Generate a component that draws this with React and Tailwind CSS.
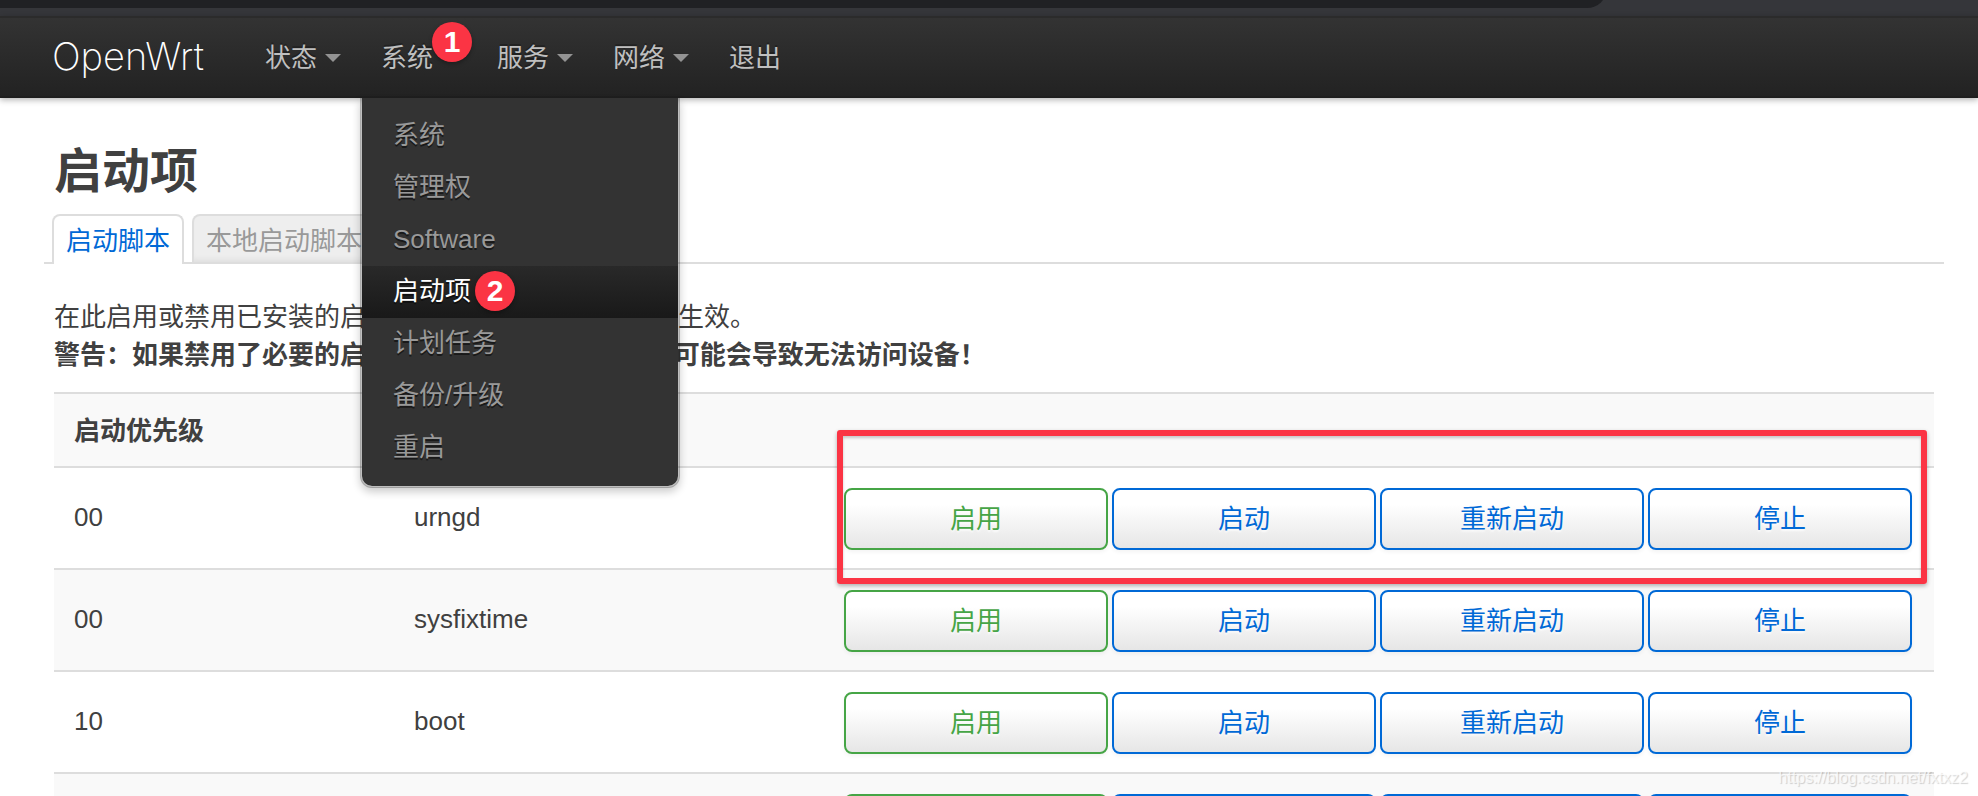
const NAV_ITEMS = [
  { label: '状态', caret: true },
  { label: '系统', open: true, badge: 1 },
  { label: '服务', caret: true },
  { label: '网络', caret: true },
  { label: '退出' },
];

const SYSTEM_MENU = [
  { label: '系统' },
  { label: '管理权' },
  { label: 'Software' },
  { label: '启动项', active: true, badge: 2 },
  { label: '计划任务' },
  { label: '备份/升级' },
  { label: '重启' },
];

const SCRIPTS = [
  { priority: '00', name: 'urngd', marked: true },
  { priority: '00', name: 'sysfixtime' },
  { priority: '10', name: 'boot' },
  { priority: '10', name: 'system' },
];

const Badge = ({ children }) => (
  <span className="flex h-10 w-10 items-center justify-center rounded-full bg-[#fb3444] text-[30px] leading-none font-bold text-white shadow-[0_2px_4px_rgba(0,0,0,0.3)] [text-shadow:none]">
    {children}
  </span>
);

const SystemMenu = () => (
  <ul className="absolute top-full left-0 z-20 w-80 rounded-b-xl border-2 border-t-0 border-black/25 bg-[#333] bg-clip-padding py-3 shadow-[0_4px_8px_rgba(0,0,0,0.2)]">
    {SYSTEM_MENU.map((item) => (
      <li key={item.label}>
        <a
          href="#"
          className={
            item.active
              ? 'relative flex h-[52px] items-center bg-linear-to-b from-[#292929] to-[#191919] pb-[2px] pl-[31px] text-white [text-shadow:0_2px_0_rgba(0,0,0,0.5)]'
              : 'flex h-[52px] items-center pb-[2px] pl-[31px] text-[#999] [text-shadow:0_2px_0_rgba(0,0,0,0.5)]'
          }
        >
          {item.label}
          {item.badge && (
            <span className="absolute left-[113px]">
              <Badge>{item.badge}</Badge>
            </span>
          )}
        </a>
      </li>
    ))}
  </ul>
);

const Header = () => (
  <header className="relative z-10 flex h-[82px] border-t-2 border-[#2b2b2b] bg-linear-to-b from-[#333] to-[#222] pl-[52px] shadow-[0_2px_6px_rgba(0,0,0,0.3),inset_0_-2px_0_rgba(0,0,0,0.1)]">
    <a
      href="#"
      className="flex w-[192px] items-center pb-1 font-['Inter'] text-[38px] leading-none font-extralight text-white"
    >
      OpenWrt
    </a>
    <nav className="flex">
      <ul className="flex">
        {NAV_ITEMS.map((item) => (
          <li key={item.label} className="relative flex w-[116px]">
            <a
              href="#"
              className="flex items-center gap-2 pl-[21px] text-[#bfbfbf] [text-shadow:0_-2px_0_rgba(0,0,0,0.25)]"
            >
              {item.label}
              {item.caret && (
                <span className="h-0 w-0 border-x-8 border-t-8 border-x-transparent border-t-[#939393]" />
              )}
            </a>
            {item.badge && (
              <span className="absolute top-1 left-[72px]">
                <Badge>{item.badge}</Badge>
              </span>
            )}
            {item.open && <SystemMenu />}
          </li>
        ))}
      </ul>
    </nav>
  </header>
);

const Tabs = () => (
  <ul className="-mx-[10px] flex gap-2 border-b-2 border-[#ddd] pl-2">
    <li className="-mb-[2px]">
      <a
        href="#"
        className="flex h-[50px] items-center rounded-t-lg border-2 border-b-0 border-[#ddd] bg-white px-3 pt-[2px] text-[#0069d6]"
      >
        启动脚本
      </a>
    </li>
    <li>
      <a
        href="#"
        className="flex h-12 items-center rounded-t-lg border-2 border-b-0 border-[#ddd] bg-[#eee] px-3 pt-1 text-[#999] shadow-[inset_0_-6px_6px_-4px_rgba(0,0,0,0.07)]"
      >
        本地启动脚本
      </a>
    </li>
  </ul>
);

const ActionButton = ({ green, children }) => (
  <button
    type="button"
    className={
      green
        ? 'h-[62px] flex-1 rounded-lg border-2 border-[#46a546] bg-[linear-gradient(#fff,#fff_25%,#e6e6e6)] text-[#46a546] shadow-[0_2px_4px_rgba(0,0,0,0.05)] [text-shadow:0_2px_2px_rgba(255,255,255,0.75)]'
        : 'h-[62px] flex-1 rounded-lg border-2 border-[#0069d6] bg-[linear-gradient(#fff,#fff_25%,#e6e6e6)] text-[#0069d6] shadow-[0_2px_4px_rgba(0,0,0,0.05)] [text-shadow:0_2px_2px_rgba(255,255,255,0.75)]'
    }
  >
    {children}
  </button>
);

const ScriptTable = () => (
  <table className="w-full table-fixed border-collapse text-left">
    <colgroup>
      <col className="w-[340px]" />
      <col className="w-[430px]" />
      <col />
    </colgroup>
    <thead>
      <tr className="h-[74px] bg-[#f9f9f9] shadow-[inset_0_2px_0_#ddd]">
        <th className="pt-1 pl-5 font-bold">启动优先级</th>
        <th className="pt-1 pl-5 font-bold">启动脚本</th>
        <th />
      </tr>
    </thead>
    <tbody>
      {SCRIPTS.map((script) => (
        <tr
          key={script.name}
          className="h-[102px] shadow-[inset_0_2px_0_#ddd] even:bg-[#f9f9f9]"
        >
          <td className="pl-5">{script.priority}</td>
          <td className="pl-5">{script.name}</td>
          <td className="relative pt-[22px] pr-[22px] pb-[18px] pl-5">
            <div className="flex gap-1">
              <ActionButton green>启用</ActionButton>
              <ActionButton>启动</ActionButton>
              <ActionButton>重新启动</ActionButton>
              <ActionButton>停止</ActionButton>
            </div>
            {/* Red frame around the first row's actions */}
            {script.marked && (
              <div className="pointer-events-none absolute -top-9 right-[7px] -bottom-4 left-[13px] z-10 rounded-[3px] border-6 border-[#fb3444] shadow-[0_2px_4px_rgba(0,0,0,0.3),inset_0_2px_3px_rgba(0,0,0,0.2)]" />
            )}
          </td>
        </tr>
      ))}
    </tbody>
  </table>
);

const App = () => {
  return (
    <div className="relative h-screen overflow-hidden bg-white font-['Liberation_Sans','Noto_Sans_CJK_SC',sans-serif] text-[26px] leading-[38px] text-[#404040]">
      {/* Lower edge of the browser toolbar */}
      <div className="h-4 bg-[#35363a] pb-2">
        <div className="flex h-2 items-end overflow-hidden">
          <div className="mr-[371px] h-10 flex-1 shrink-0 rounded-br-[20px] bg-[#202124]" />
        </div>
      </div>

      <Header />

      <main className="pt-[46px] pr-11 pl-[54px]">
        <h1 className="text-[48px] leading-[56px] font-bold">启动项</h1>
        <div className="pt-[14px]">
          <Tabs />
        </div>
        <p className="pt-[34px]">
          在此启用或禁用已安装的启动脚本。更改在设备重启后生效。
          <br />
          <strong>警告：如果禁用了必要的启动脚本，比如“network”，可能会导致无法访问设备！</strong>
        </p>
        <div className="pt-[18px]">
          <ScriptTable />
        </div>
      </main>

      <div className="absolute right-[10px] bottom-[6px] z-20 text-[16px] leading-6 text-white/70 [text-shadow:1px_1px_1px_rgba(0,0,0,0.18)]">
        https://blog.csdn.net/fxtxz2
      </div>
    </div>
  );
};

export default App;
